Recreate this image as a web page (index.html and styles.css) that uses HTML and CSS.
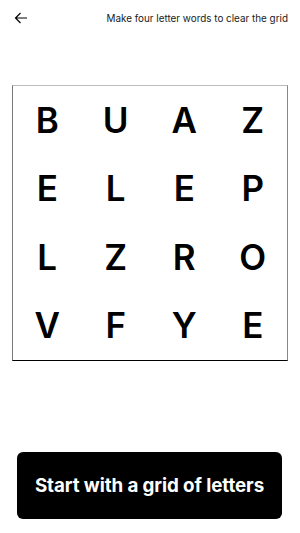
FILE: index.html
```html
<!DOCTYPE html>
<html>
<head>
<meta charset="utf-8">
<link rel="stylesheet" href="styles.css">
</head>
<body>
<div class="screen">
  <header class="top">
    <svg class="back" width="14" height="12" viewBox="0 0 14 12"><path d="M13 6H1.5M6.5 1L1.5 6l5 5" fill="none" stroke="#000" stroke-width="1.2"/></svg>
    <span class="hint">Make four letter words to clear the grid</span>
  </header>
  <main class="board">
    <div class="grid">
      <span>B</span><span>U</span><span>A</span><span>Z</span>
      <span>E</span><span>L</span><span>E</span><span>P</span>
      <span>L</span><span>Z</span><span>R</span><span>O</span>
      <span>V</span><span>F</span><span>Y</span><span>E</span>
    </div>
  </main>
  <button class="start">Start with a grid of letters</button>
</div>
</body>
</html>
```
FILE: styles.css
```css
html, body { margin: 0; padding: 0; background: #fff; }
body { font-family: Inter, "Noto Sans", sans-serif; color: #000; }
.screen { width: 300px; height: 533px; display: flex; flex-direction: column; }
.top { display: flex; align-items: center; justify-content: space-between; padding: 11px 12px 0 14px; height: 14px; }
.back { display: block; }
.hint { font-size: 9.9px; color: #1a1a1a; }
.board { padding: 60px 12px 0 12px; }
.grid { width: 276px; height: 276px; box-sizing: border-box; border-top: 1px solid #bbb; border-left: 1px solid #777; border-right: 1px solid #888; border-bottom: 1px solid #000; display: grid; grid-template-columns: repeat(4, 1fr); grid-template-rows: repeat(4, 1fr); }
.grid span { display: flex; align-items: center; justify-content: center; font-size: 35px; font-weight: 600; line-height: 1; }
.start { margin: 91px 18px 0 17px; height: 67px; background: #000; color: #fff; border: none; border-radius: 6px; font-family: Inter, sans-serif; font-weight: 700; font-size: 18.8px; letter-spacing: -0.1px; }
```
